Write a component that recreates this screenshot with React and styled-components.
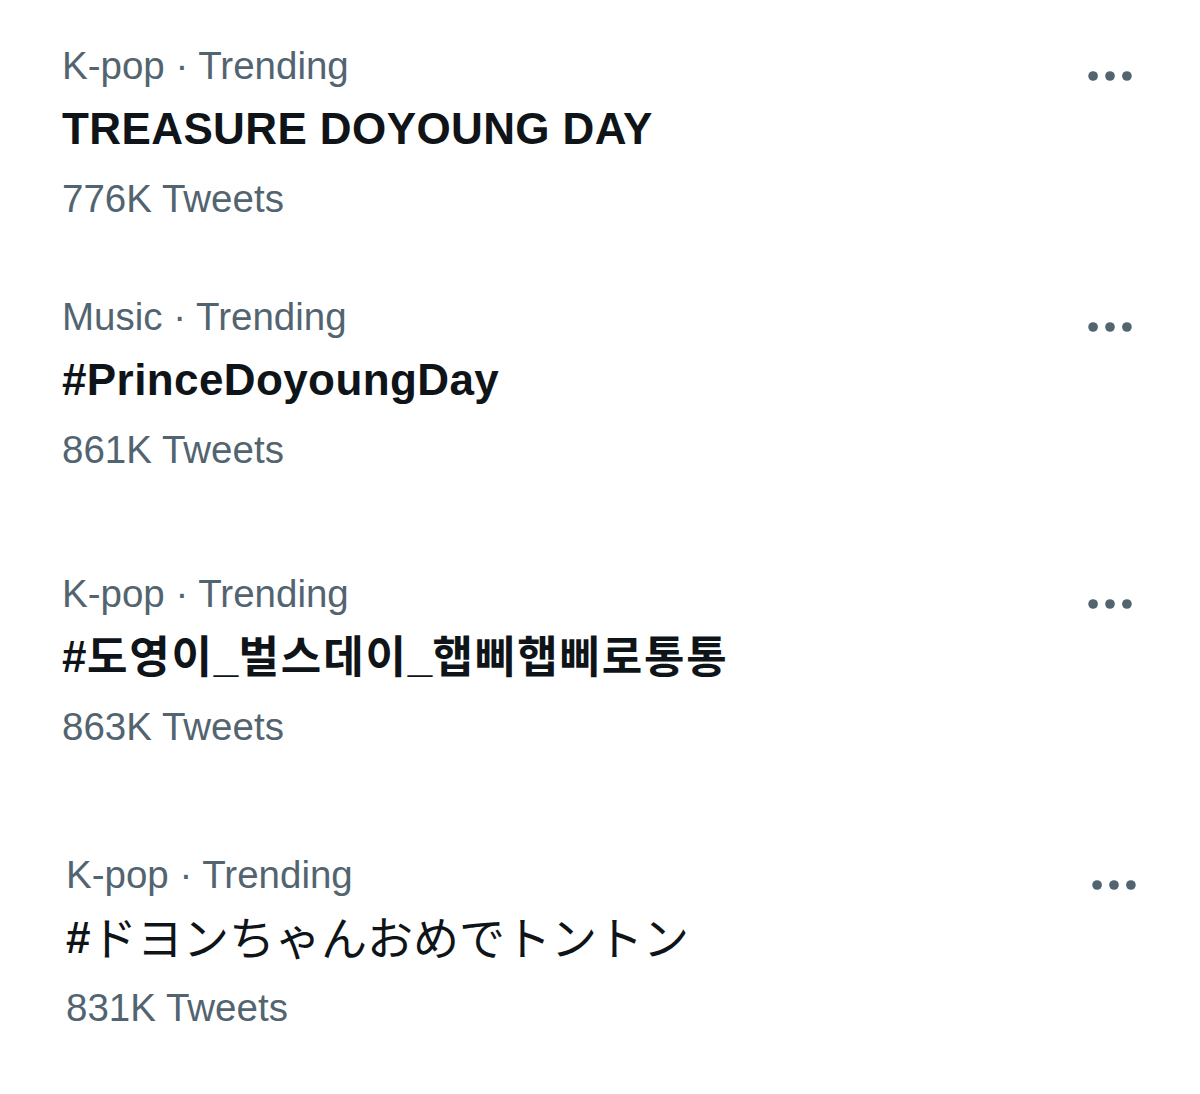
import React from "react";
import styled, { createGlobalStyle } from "styled-components";

const GlobalStyle = createGlobalStyle`
  html, body {
    margin: 0;
    padding: 0;
    background: #ffffff;
  }
  body {
    font-family: "Liberation Sans", Arial, "Noto Sans CJK KR", sans-serif;
    -webkit-font-smoothing: antialiased;
  }
`;

const Page = styled.div`
  width: 1200px;
  min-height: 1094px;
  box-sizing: border-box;
  padding: 41px 61px 0 62px;
  display: flex;
  flex-direction: column;
  background: #ffffff;
`;

const TrendRow = styled.div`
  display: flex;
  justify-content: space-between;
  align-items: flex-start;
  margin-top: ${(p) => p.$gap}px;
  padding-left: ${(p) => p.$shift || 0}px;
  margin-right: ${(p) => -(p.$shift || 0)}px;
`;

const TrendText = styled.div`
  display: flex;
  flex-direction: column;
`;

const Meta = styled.div`
  font-family: "Liberation Sans", Arial, sans-serif;
  font-size: 38.5px;
  line-height: 50px;
  height: 50px;
  color: #536471;
  white-space: nowrap;
`;

const Count = styled(Meta)`
  margin-top: 14px;
`;

const Title = styled.div`
  margin-top: 7px;
  height: 62px;
  font-family: "Liberation Sans", Arial, "Noto Sans CJK KR", sans-serif;
  font-size: 44px;
  line-height: 62px;
  font-weight: 700;
  letter-spacing: 0.4px;
  color: #0f1419;
  white-space: nowrap;
`;

const Hangul = styled.span`
  font-family: "Noto Sans CJK KR", sans-serif;
  font-size: 44px;
  line-height: 1;
  letter-spacing: 1.8px;
  font-weight: 700;
  position: relative;
  top: 1px;
`;

const Kana = styled.span`
  font-family: "Noto Sans CJK JP", sans-serif;
  font-size: 46px;
  line-height: 1;
  letter-spacing: 0;
  font-weight: 400;
  position: relative;
  top: 2px;
`;

const MoreButton = styled.div`
  width: 58px;
  height: 58px;
  margin-top: 6px;
  display: flex;
  align-items: center;
  justify-content: center;
  color: #536471;
  flex-shrink: 0;
`;

const MoreIcon = () => (
  <svg width="58" height="58" viewBox="0 0 24 24" fill="currentColor" aria-hidden="true">
    <circle cx="5" cy="12" r="2" />
    <circle cx="12" cy="12" r="2" />
    <circle cx="19" cy="12" r="2" />
  </svg>
);

const trends = [
  {
    id: 1,
    meta: "K-pop · Trending",
    title: "TREASURE DOYOUNG DAY",
    count: "776K Tweets",
    gap: 0,
  },
  {
    id: 2,
    meta: "Music · Trending",
    title: "#PrinceDoyoungDay",
    count: "861K Tweets",
    gap: 68,
  },
  {
    id: 3,
    meta: "K-pop · Trending",
    title: (
      <>
        #<Hangul>도영이</Hangul>_<Hangul>벌스데이</Hangul>_<Hangul>햅삐햅삐로통통</Hangul>
      </>
    ),
    count: "863K Tweets",
    gap: 94,
  },
  {
    id: 4,
    meta: "K-pop · Trending",
    title: (
      <>
        #<Kana>ドヨンちゃんおめでトントン</Kana>
      </>
    ),
    count: "831K Tweets",
    gap: 98,
    shift: 4,
  },
];

export default function App() {
  return (
    <>
      <GlobalStyle />
      <Page>
        {trends.map((t) => (
          <TrendRow key={t.id} $gap={t.gap} $shift={t.shift}>
            <TrendText>
              <Meta>{t.meta}</Meta>
              <Title>{t.title}</Title>
              <Count>{t.count}</Count>
            </TrendText>
            <MoreButton>
              <MoreIcon />
            </MoreButton>
          </TrendRow>
        ))}
      </Page>
    </>
  );
}
